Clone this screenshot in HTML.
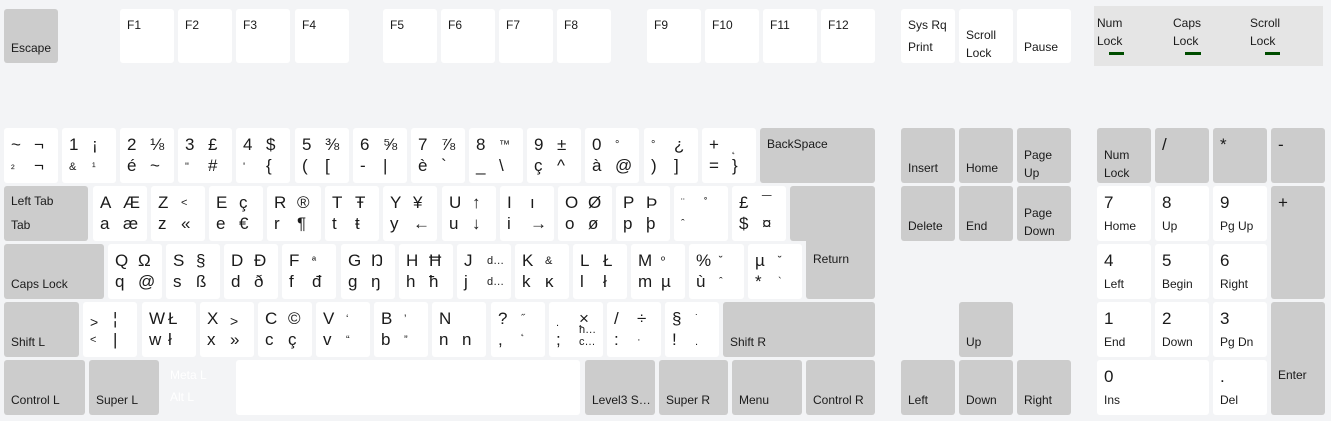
<!DOCTYPE html>
<html><head><meta charset="utf-8"><style>
body{margin:0;width:1331px;height:421px;background:#f3f4f6;position:relative;overflow:hidden;font-family:"Liberation Sans","DejaVu Sans",sans-serif;color:#1a1a1a}
.k{position:absolute;background:#fff;border-radius:3px;width:54px;height:55px}
.g{background:#cccccc}
.f{top:9px;height:54px}
.k span{position:absolute;white-space:nowrap;line-height:18px}
.a,.b,.c,.d{font-size:17px}
.a{left:7px;top:8px}.b{left:30px;top:8px}.c{left:7px;top:29px}.d{left:30px;top:29px}
.s{font-size:11px!important}
.l{left:7px;bottom:6px;font-size:12px}
.t{left:7px;top:7px;font-size:12px}
.r1{top:128px}.r2{top:186px}.r3{top:244px}.r4{top:302px}.r5{top:360px}
.ind{position:absolute;left:1094px;top:6px;width:229px;height:60px;background:#e5e5e5}
.ind span{position:absolute;font-size:12px;line-height:18px}
.ind i{position:absolute;top:46px;width:15px;height:3px;background:#004d00}
</style></head><body>
<div class="k g f" style="left:4px"><span class="l">Escape</span></div>
<div class="k f" style="left:120px"><span class="t">F1</span></div>
<div class="k f" style="left:178px"><span class="t">F2</span></div>
<div class="k f" style="left:236px"><span class="t">F3</span></div>
<div class="k f" style="left:295px"><span class="t">F4</span></div>
<div class="k f" style="left:383px"><span class="t">F5</span></div>
<div class="k f" style="left:441px"><span class="t">F6</span></div>
<div class="k f" style="left:499px"><span class="t">F7</span></div>
<div class="k f" style="left:557px"><span class="t">F8</span></div>
<div class="k f" style="left:647px"><span class="t">F9</span></div>
<div class="k f" style="left:705px"><span class="t">F10</span></div>
<div class="k f" style="left:763px"><span class="t">F11</span></div>
<div class="k f" style="left:821px"><span class="t">F12</span></div>
<div class="k f" style="left:901px"><span class="t" style="top:7px">Sys Rq</span><span class="t" style="top:29px">Print</span></div>
<div class="k f" style="left:959px"><span class="t" style="top:17px">Scroll</span><span class="t" style="top:35px">Lock</span></div>
<div class="k f" style="left:1017px"><span class="t" style="top:29px">Pause</span></div>
<div class="ind"><span style="left:3px;top:8px">Num</span><span style="left:3px;top:26px">Lock</span><i style="left:15px"></i>
<span style="left:79px;top:8px">Caps</span><span style="left:79px;top:26px">Lock</span><i style="left:91px;width:16px"></i>
<span style="left:156px;top:8px">Scroll</span><span style="left:156px;top:26px">Lock</span><i style="left:171px"></i></div>

<!-- row1 -->
<div class="k r1" style="left:4px"><span class="a">~</span><span class="b">¬</span><span class="c s" style="top:32px">²</span><span class="d">¬</span></div>
<div class="k r1" style="left:62px"><span class="a">1</span><span class="b">¡</span><span class="c s" style="top:30px">&amp;</span><span class="d s" style="top:30px">¹</span></div>
<div class="k r1" style="left:120px"><span class="a">2</span><span class="b">⅛</span><span class="c">é</span><span class="d">~</span></div>
<div class="k r1" style="left:178px"><span class="a">3</span><span class="b">£</span><span class="c s" style="top:30px">"</span><span class="d">#</span></div>
<div class="k r1" style="left:236px"><span class="a">4</span><span class="b">$</span><span class="c s" style="top:30px">'</span><span class="d">{</span></div>
<div class="k r1" style="left:295px"><span class="a">5</span><span class="b">⅜</span><span class="c">(</span><span class="d">[</span></div>
<div class="k r1" style="left:353px"><span class="a">6</span><span class="b">⅝</span><span class="c">-</span><span class="d">|</span></div>
<div class="k r1" style="left:411px"><span class="a">7</span><span class="b">⅞</span><span class="c">è</span><span class="d">`</span></div>
<div class="k r1" style="left:469px"><span class="a">8</span><span class="b s">™</span><span class="c">_</span><span class="d">\</span></div>
<div class="k r1" style="left:527px"><span class="a">9</span><span class="b">±</span><span class="c">ç</span><span class="d">^</span></div>
<div class="k r1" style="left:585px"><span class="a">0</span><span class="b s">°</span><span class="c">à</span><span class="d">@</span></div>
<div class="k r1" style="left:644px"><span class="a s">°</span><span class="b">¿</span><span class="c">)</span><span class="d">]</span></div>
<div class="k r1" style="left:702px"><span class="a">+</span><span class="b s" style="top:12px">˛</span><span class="c">=</span><span class="d">}</span></div>
<div class="k g r1" style="left:760px;width:115px"><span class="t" style="top:7px">BackSpace</span></div>
<!-- row2 -->
<div class="k g r2" style="left:4px;width:84px"><span class="t" style="top:6px">Left Tab</span><span class="t" style="top:30px">Tab</span></div>
<div class="k r2" style="left:93px"><span class="a">A</span><span class="b">Æ</span><span class="c">a</span><span class="d">æ</span></div>
<div class="k r2" style="left:151px"><span class="a">Z</span><span class="b s">&lt;</span><span class="c">z</span><span class="d">«</span></div>
<div class="k r2" style="left:209px"><span class="a">E</span><span class="b">ç</span><span class="c">e</span><span class="d">€</span></div>
<div class="k r2" style="left:267px"><span class="a">R</span><span class="b">®</span><span class="c">r</span><span class="d">¶</span></div>
<div class="k r2" style="left:325px"><span class="a">T</span><span class="b">Ŧ</span><span class="c">t</span><span class="d">ŧ</span></div>
<div class="k r2" style="left:383px"><span class="a">Y</span><span class="b">¥</span><span class="c">y</span><span class="d">←</span></div>
<div class="k r2" style="left:442px"><span class="a">U</span><span class="b">↑</span><span class="c">u</span><span class="d">↓</span></div>
<div class="k r2" style="left:500px"><span class="a">I</span><span class="b">ı</span><span class="c">i</span><span class="d">→</span></div>
<div class="k r2" style="left:558px"><span class="a">O</span><span class="b">Ø</span><span class="c">o</span><span class="d">ø</span></div>
<div class="k r2" style="left:616px"><span class="a">P</span><span class="b">Þ</span><span class="c">p</span><span class="d">þ</span></div>
<div class="k r2" style="left:674px"><span class="a s">¨</span><span class="b s">˚</span><span class="c s">ˆ</span></div>
<div class="k r2" style="left:732px"><span class="a">£</span><span class="b">¯</span><span class="c">$</span><span class="d">¤</span></div>
<div class="k g r2" style="left:790px;width:85px"></div>
<div class="k g" style="left:806px;top:230px;width:69px;height:69px"><span class="t" style="top:20px">Return</span></div>
<!-- row3 -->
<div class="k g r3" style="left:4px;width:100px"><span class="l">Caps Lock</span></div>
<div class="k r3" style="left:108px"><span class="a">Q</span><span class="b">Ω</span><span class="c">q</span><span class="d">@</span></div>
<div class="k r3" style="left:166px"><span class="a">S</span><span class="b">§</span><span class="c">s</span><span class="d">ß</span></div>
<div class="k r3" style="left:224px"><span class="a">D</span><span class="b">Đ</span><span class="c">d</span><span class="d">ð</span></div>
<div class="k r3" style="left:282px"><span class="a">F</span><span class="b s">ª</span><span class="c">f</span><span class="d">đ</span></div>
<div class="k r3" style="left:341px"><span class="a">G</span><span class="b">Ŋ</span><span class="c">g</span><span class="d">ŋ</span></div>
<div class="k r3" style="left:399px"><span class="a">H</span><span class="b">Ħ</span><span class="c">h</span><span class="d">ħ</span></div>
<div class="k r3" style="left:457px"><span class="a">J</span><span class="b s">d…</span><span class="c">j</span><span class="d s">d…</span></div>
<div class="k r3" style="left:515px"><span class="a">K</span><span class="b s">&amp;</span><span class="c">k</span><span class="d">ĸ</span></div>
<div class="k r3" style="left:573px"><span class="a">L</span><span class="b">Ł</span><span class="c">l</span><span class="d">ł</span></div>
<div class="k r3" style="left:631px"><span class="a">M</span><span class="b s">º</span><span class="c">m</span><span class="d">µ</span></div>
<div class="k r3" style="left:689px;width:55px"><span class="a">%</span><span class="b s">˘</span><span class="c">ù</span><span class="d s">ˆ</span></div>
<div class="k r3" style="left:748px"><span class="a">µ</span><span class="b s">˘</span><span class="c">*</span><span class="d s">`</span></div>
<!-- row4 -->
<div class="k g r4" style="left:4px;width:75px"><span class="l">Shift L</span></div>
<div class="k r4" style="left:83px"><span class="a s" style="top:11px;font-size:14px!important">&gt;</span><span class="b">¦</span><span class="c s">&lt;</span><span class="d">|</span></div>
<div class="k r4" style="left:142px"><span class="a">W</span><span class="b" style="left:26px">Ł</span><span class="c">w</span><span class="d" style="left:26px">ł</span></div>
<div class="k r4" style="left:200px"><span class="a">X</span><span class="b s" style="font-size:14px!important;top:10px">&gt;</span><span class="c">x</span><span class="d">»</span></div>
<div class="k r4" style="left:258px"><span class="a">C</span><span class="b">©</span><span class="c">c</span><span class="d">ç</span></div>
<div class="k r4" style="left:316px"><span class="a">V</span><span class="b s">‘</span><span class="c">v</span><span class="d s">“</span></div>
<div class="k r4" style="left:374px"><span class="a">B</span><span class="b s">’</span><span class="c">b</span><span class="d s">”</span></div>
<div class="k r4" style="left:432px"><span class="a">N</span><span class="c">n</span><span class="d">n</span></div>
<div class="k r4" style="left:491px"><span class="a">?</span><span class="b s">˝</span><span class="c">,</span><span class="d s" style="top:20px">˛</span></div>
<div class="k r4" style="left:549px"><span class="a s" style="top:12px">.</span><span class="b">×</span><span class="b s" style="top:19px">ħ…</span><span class="c">;</span><span class="d s" style="top:31px">c…</span></div>
<div class="k r4" style="left:607px"><span class="a">/</span><span class="b">÷</span><span class="c">:</span><span class="d s">·</span></div>
<div class="k r4" style="left:665px"><span class="a">§</span><span class="b s">˙</span><span class="c">!</span><span class="d s" style="top:31px">.</span></div>
<div class="k g r4" style="left:723px;width:152px"><span class="l">Shift R</span></div>
<!-- row5 -->
<div class="k g r5" style="left:4px;width:81px"><span class="l">Control L</span></div>
<div class="k g r5" style="left:89px;width:70px"><span class="l">Super L</span></div>
<div class="k r5" style="left:163px;width:70px;background:transparent;color:#fff"><span class="t" style="top:6px">Meta L</span><span class="t" style="top:28px">Alt L</span></div>
<div class="k r5" style="left:236px;width:344px"></div>
<div class="k g r5" style="left:585px;width:70px"><span class="l">Level3 S…</span></div>
<div class="k g r5" style="left:659px;width:69px"><span class="l">Super R</span></div>
<div class="k g r5" style="left:732px;width:70px"><span class="l">Menu</span></div>
<div class="k g r5" style="left:806px;width:69px"><span class="l">Control R</span></div>
<!-- nav -->
<div class="k g r1" style="left:901px"><span class="l">Insert</span></div>
<div class="k g r1" style="left:959px"><span class="l">Home</span></div>
<div class="k g r1" style="left:1017px"><span class="t" style="top:18px">Page</span><span class="t" style="top:36px">Up</span></div>
<div class="k g r2" style="left:901px"><span class="l">Delete</span></div>
<div class="k g r2" style="left:959px"><span class="l">End</span></div>
<div class="k g r2" style="left:1017px"><span class="t" style="top:18px">Page</span><span class="t" style="top:36px">Down</span></div>
<div class="k g r4" style="left:959px"><span class="l">Up</span></div>
<div class="k g r5" style="left:901px"><span class="l">Left</span></div>
<div class="k g r5" style="left:959px"><span class="l">Down</span></div>
<div class="k g r5" style="left:1017px"><span class="l">Right</span></div>
<!-- numpad -->
<div class="k g r1" style="left:1097px"><span class="t" style="top:18px">Num</span><span class="t" style="top:36px">Lock</span></div>
<div class="k g r1" style="left:1155px"><span class="a">/</span></div>
<div class="k g r1" style="left:1213px"><span class="a">*</span></div>
<div class="k g r1" style="left:1271px"><span class="a">-</span></div>
<div class="k r2" style="left:1097px"><span class="a">7</span><span class="t" style="top:31px">Home</span></div>
<div class="k r2" style="left:1155px"><span class="a">8</span><span class="t" style="top:31px">Up</span></div>
<div class="k r2" style="left:1213px"><span class="a">9</span><span class="t" style="top:31px">Pg Up</span></div>
<div class="k g r2" style="left:1271px;height:113px"><span class="a">+</span></div>
<div class="k r3" style="left:1097px"><span class="a">4</span><span class="t" style="top:31px">Left</span></div>
<div class="k r3" style="left:1155px"><span class="a">5</span><span class="t" style="top:31px">Begin</span></div>
<div class="k r3" style="left:1213px"><span class="a">6</span><span class="t" style="top:31px">Right</span></div>
<div class="k r4" style="left:1097px"><span class="a">1</span><span class="t" style="top:31px">End</span></div>
<div class="k r4" style="left:1155px"><span class="a">2</span><span class="t" style="top:31px">Down</span></div>
<div class="k r4" style="left:1213px"><span class="a">3</span><span class="t" style="top:31px">Pg Dn</span></div>
<div class="k g r4" style="left:1271px;height:113px"><span class="t" style="top:64px">Enter</span></div>
<div class="k r5" style="left:1097px;width:112px"><span class="a">0</span><span class="t" style="top:31px">Ins</span></div>
<div class="k r5" style="left:1213px"><span class="a">.</span><span class="t" style="top:31px">Del</span></div>
</body></html>
